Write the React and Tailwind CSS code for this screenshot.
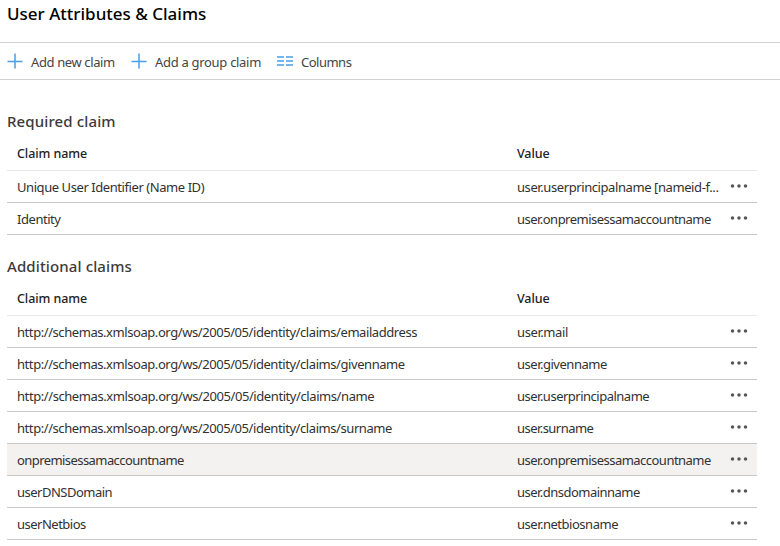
const required = [
  {
    name: 'Unique User Identifier (Name ID)',
    value: 'user.userprincipalname [nameid-f...',
    nameTracking: 'tracking-[-0.43px]',
    valueTracking: 'tracking-[-0.41px]',
  },
  {
    name: 'Identity',
    value: 'user.onpremisessamaccountname',
    nameTracking: 'tracking-[-0.45px]',
    valueTracking: 'tracking-[-0.52px]',
  },
];

const additional = [
  {
    name: 'http://schemas.xmlsoap.org/ws/2005/05/identity/claims/emailaddress',
    value: 'user.mail',
    nameTracking: 'tracking-[-0.43px]',
    valueTracking: 'tracking-[-0.4px]',
  },
  {
    name: 'http://schemas.xmlsoap.org/ws/2005/05/identity/claims/givenname',
    value: 'user.givenname',
    nameTracking: 'tracking-[-0.43px]',
    valueTracking: 'tracking-[-0.48px]',
  },
  {
    name: 'http://schemas.xmlsoap.org/ws/2005/05/identity/claims/name',
    value: 'user.userprincipalname',
    nameTracking: 'tracking-[-0.42px]',
    valueTracking: 'tracking-[-0.5px]',
  },
  {
    name: 'http://schemas.xmlsoap.org/ws/2005/05/identity/claims/surname',
    value: 'user.surname',
    nameTracking: 'tracking-[-0.43px]',
    valueTracking: 'tracking-[-0.54px]',
  },
  {
    name: 'onpremisessamaccountname',
    value: 'user.onpremisessamaccountname',
    nameTracking: 'tracking-[-0.57px]',
    valueTracking: 'tracking-[-0.52px]',
    active: true,
  },
  {
    name: 'userDNSDomain',
    value: 'user.dnsdomainname',
    nameTracking: 'tracking-[-0.51px]',
    valueTracking: 'tracking-[-0.52px]',
  },
  {
    name: 'userNetbios',
    value: 'user.netbiosname',
    nameTracking: 'tracking-[-0.5px]',
    valueTracking: 'tracking-[-0.48px]',
  },
];

function PlusIcon() {
  return (
    <svg className="block h-4 w-4" viewBox="0 0 16 16" fill="none" stroke="#4a9fe6" strokeWidth="1.5">
      <path d="M8 0.5v15M0.5 8.5h15" />
    </svg>
  );
}

function ColumnsIcon() {
  return (
    <svg className="block h-4 w-4" viewBox="0 0 16 16" fill="#75b5ea" shapeRendering="crispEdges">
      <path d="M0 3h7v2H0zM9 3h7v2H9zM0 7h7v2H0zM9 7h7v2H9zM0 11h7v2H0zM9 11h7v2H9z" />
    </svg>
  );
}

function Dots() {
  return (
    <svg className="block h-4 w-[18px]" viewBox="0 0 18 16" fill="#555">
      <circle cx="2.5" cy="7" r="1.75" />
      <circle cx="9" cy="7" r="1.75" />
      <circle cx="15.5" cy="7" r="1.75" />
    </svg>
  );
}

function ClaimsTable({ title, rows }) {
  return (
    <section className="pl-[7px] pr-[23px]">
      <h2 className="flex h-[33px] items-center pb-0.5 text-[15px] font-medium tracking-[0.12px] text-[#3b3a39]">{title}</h2>
      <div className="flex h-[33px] items-center border-b border-[#e8e8e8] pl-2.5 text-[12.5px] font-medium tracking-[-0.08px] text-[#222]">
        <div className="w-[500px]">Claim name</div>
        <div>Value</div>
      </div>
      {rows.map((r) => (
        <div
          key={r.name}
          className={`flex h-8 items-center whitespace-nowrap border-b border-[#c8c8c8] pl-2.5 text-[#323130] ${r.active ? 'bg-[#f3f2f1]' : ''}`}
        >
          <div className={`w-[500px] pt-px ${r.nameTracking}`}>{r.name}</div>
          <div className={`w-[213px] pt-px ${r.valueTracking}`}>{r.value}</div>
          <Dots />
        </div>
      ))}
    </section>
  );
}

export default function App() {
  return (
    <main className="h-[546px] w-[780px] overflow-hidden bg-white font-['Noto_Sans','Open_Sans',sans-serif] text-[13px] leading-5">
      <h1 className="flex h-[42px] items-start pl-[7px] pt-0.5 text-[17px] leading-6 font-medium text-black">
        User Attributes &amp; Claims
      </h1>
      <nav className="flex h-[38px] items-center border-y border-[#d2d2d2] pl-[7px] text-[#444]">
        <div className="flex w-[124px] items-center gap-2">
          <PlusIcon />
          <span className="pt-0.5 tracking-[-0.38px]">Add new claim</span>
        </div>
        <div className="flex w-[146px] items-center gap-2">
          <PlusIcon />
          <span className="pt-0.5 tracking-[-0.3px]">Add a group claim</span>
        </div>
        <div className="flex items-center gap-2">
          <ColumnsIcon />
          <span className="pt-0.5 tracking-[-0.5px]">Columns</span>
        </div>
      </nav>
      <div className="flex flex-col gap-[15px] pt-[25px]">
        <ClaimsTable title="Required claim" rows={required} />
        <ClaimsTable title="Additional claims" rows={additional} />
      </div>
    </main>
  );
}
